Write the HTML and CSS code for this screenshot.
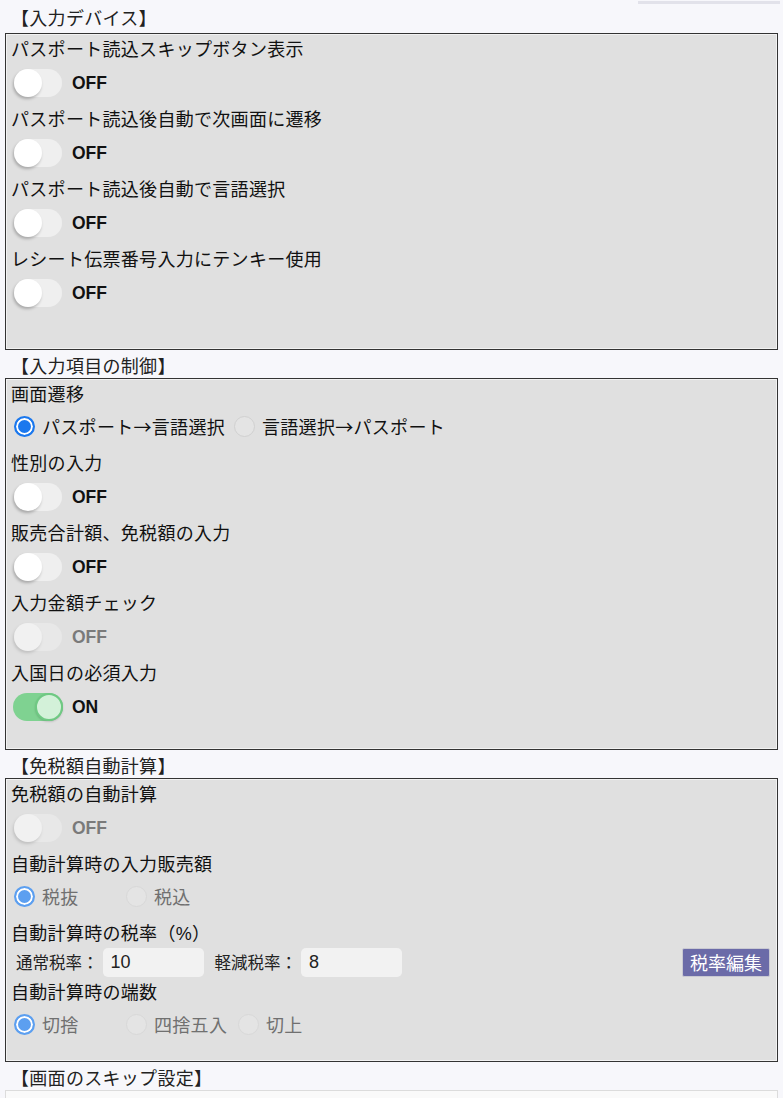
FILE: index.html
```html
<!DOCTYPE html>
<html lang="ja">
<head>
    <meta charset="UTF-8">
    <meta name="viewport" content="width=device-width, initial-scale=1.0">
    <title>設定</title>
    <link rel="stylesheet" href="styles.css">
</head>
<body>

<div class="top-strip"><span class="strip-bar"></span></div>

<div id="settings">

<!-- 入力デバイス -->
<div class="group group-first">
    <div class="group-title">【入力デバイス】</div>
    <div class="group-box box-device">
        <div class="item">
            <div class="item-label">パスポート読込スキップボタン表示</div>
            <div class="toggle-row">
                <label class="switch"><input type="checkbox"><span class="slider"></span></label>
                <span class="switch-text">OFF</span>
            </div>
        </div>
        <div class="item">
            <div class="item-label">パスポート読込後自動で次画面に遷移</div>
            <div class="toggle-row">
                <label class="switch"><input type="checkbox"><span class="slider"></span></label>
                <span class="switch-text">OFF</span>
            </div>
        </div>
        <div class="item">
            <div class="item-label">パスポート読込後自動で言語選択</div>
            <div class="toggle-row">
                <label class="switch"><input type="checkbox"><span class="slider"></span></label>
                <span class="switch-text">OFF</span>
            </div>
        </div>
        <div class="item">
            <div class="item-label">レシート伝票番号入力にテンキー使用</div>
            <div class="toggle-row">
                <label class="switch"><input type="checkbox"><span class="slider"></span></label>
                <span class="switch-text">OFF</span>
            </div>
        </div>
    </div>
</div>

<!-- 入力項目の制御 -->
<div class="group">
    <div class="group-title">【入力項目の制御】</div>
    <div class="group-box box-input">
        <div class="item">
            <div class="item-label">画面遷移</div>
            <div class="radio-row">
                <label class="radio-option"><input type="radio" name="flow" checked>パスポート→言語選択</label>
                <label class="radio-option"><input type="radio" name="flow">言語選択→パスポート</label>
            </div>
        </div>
        <div class="item">
            <div class="item-label">性別の入力</div>
            <div class="toggle-row">
                <label class="switch"><input type="checkbox"><span class="slider"></span></label>
                <span class="switch-text">OFF</span>
            </div>
        </div>
        <div class="item">
            <div class="item-label">販売合計額、免税額の入力</div>
            <div class="toggle-row">
                <label class="switch"><input type="checkbox"><span class="slider"></span></label>
                <span class="switch-text">OFF</span>
            </div>
        </div>
        <div class="item">
            <div class="item-label">入力金額チェック</div>
            <div class="toggle-row is-disabled">
                <label class="switch"><input type="checkbox" disabled><span class="slider"></span></label>
                <span class="switch-text">OFF</span>
            </div>
        </div>
        <div class="item">
            <div class="item-label">入国日の必須入力</div>
            <div class="toggle-row">
                <label class="switch"><input type="checkbox" checked><span class="slider"></span></label>
                <span class="switch-text">ON</span>
            </div>
        </div>
    </div>
</div>

<!-- 免税額自動計算 -->
<div class="group">
    <div class="group-title">【免税額自動計算】</div>
    <div class="group-box box-calc">
        <div class="item">
            <div class="item-label">免税額の自動計算</div>
            <div class="toggle-row is-disabled">
                <label class="switch"><input type="checkbox" disabled><span class="slider"></span></label>
                <span class="switch-text">OFF</span>
            </div>
        </div>
        <div class="item">
            <div class="item-label">自動計算時の入力販売額</div>
            <div class="radio-row">
                <label class="radio-option"><input type="radio" name="base" checked disabled>税抜</label>
                <label class="radio-option"><input type="radio" name="base" disabled>税込</label>
            </div>
        </div>
        <div class="item">
            <div class="item-label">自動計算時の税率（%）</div>
            <div class="rate-row">
                <span class="rate-label">通常税率：</span>
                <input class="rate-input" type="text" value="10">
                <span class="rate-label">軽減税率：</span>
                <input class="rate-input" type="text" value="8">
                <button type="button" class="rate-button">税率編集</button>
            </div>
        </div>
        <div class="item">
            <div class="item-label">自動計算時の端数</div>
            <div class="radio-row">
                <label class="radio-option"><input type="radio" name="round" checked disabled>切捨</label>
                <label class="radio-option"><input type="radio" name="round" disabled>四捨五入</label>
                <label class="radio-option"><input type="radio" name="round" disabled>切上</label>
            </div>
        </div>
    </div>
</div>

<!-- 画面のスキップ設定 -->
<div class="group">
    <div class="group-title">【画面のスキップ設定】</div>
    <div class="group-box box-skip"></div>
</div>

</div>

</body>
</html>
```

FILE: styles.css
```css
body {
    margin: 0;
    background-color: #f7f7fb;
    font-family: "Liberation Sans", "Noto Sans CJK JP", sans-serif;
    font-size: 18px;
    color: #111;
}

.top-strip {
    display: flex;
    justify-content: flex-end;
    height: 8px;
}

.strip-bar {
    width: 142px;
    height: 3px;
    margin: 1px 3px 0 0;
    background-color: #e2e2ea;
}

#settings {
    padding: 0 5px;
}

.group-title {
    padding: 0 0 0 6px;
    line-height: 22px;
    letter-spacing: 0.3px;
    color: #222;
}

.group + .group .group-title {
    padding-top: 6px;
}

.group-first .group-title {
    margin-bottom: 3px;
}

.group-box {
    background-color: #e0e0e0;
    border: 1px solid #333;
    box-shadow: inset 0 0 0 1px #f2f2f2;
    padding: 3px 5px 12px 5px;
}

.box-device { padding-bottom: 32px; }
.box-input  { padding-bottom: 18px; }
.box-calc   { padding-bottom: 12px; }

.box-skip {
    height: 30px;
    background-color: #fafafa;
    border-color: #dcdcdc;
    box-shadow: none;
}

.item-label {
    line-height: 26px;
    letter-spacing: 0.3px;
}

/* toggle switch */
.toggle-row {
    display: flex;
    align-items: center;
    height: 30px;
    margin: 5px 0 9px 0;
    padding-left: 3px;
}

.switch {
    display: block;
    width: 48px;
    height: 28px;
    cursor: pointer;
}

.switch input {
    display: none;
}

.slider {
    display: flex;
    justify-content: flex-start;
    height: 100%;
    border-radius: 14px;
    background-color: #efefef;
}

.slider::before {
    content: "";
    width: 28px;
    height: 28px;
    border-radius: 50%;
    background-color: #fff;
    box-shadow: -1px 2px 3px rgba(0, 0, 0, 0.25);
}

.switch input:checked + .slider {
    justify-content: flex-end;
    background-color: #7fd291;
    margin-left: -1px;
    width: 50px;
}

.switch input:checked + .slider::before {
    box-sizing: border-box;
    border: 2px solid #6fc983;
    background-color: #d3f1d9;
    box-shadow: 0 1px 2px rgba(0, 0, 0, 0.15);
}

.switch-text {
    margin-left: 10px;
    font-size: 17.5px;
    font-weight: bold;
    color: #111;
}

.is-disabled .switch {
    opacity: 0.55;
}

.is-disabled .switch-text {
    color: #7a7a7a;
}

/* radio buttons */
.radio-row {
    display: flex;
    align-items: center;
    height: 30px;
    margin: 3px 0 10px 0;
    padding-left: 3px;
}

.radio-option {
    display: flex;
    align-items: center;
    min-width: 103px;
    margin-right: 9px;
    font-family: "Noto Sans CJK JP", sans-serif;
    letter-spacing: 0.3px;
}

.radio-option input {
    appearance: none;
    -webkit-appearance: none;
    box-sizing: border-box;
    width: 21px;
    height: 21px;
    margin: 0 7px 0 0;
    border-radius: 50%;
    border: 1px solid #d0d0d0;
    background-color: #e4e4e4;
}

.radio-option input:checked {
    border: 2px solid #1b78ee;
    background-color: #1b78ee;
    box-shadow: inset 0 0 0 2px #fff;
}

.radio-option input:disabled {
    border-color: #d8d8d8;
}

.radio-option input:disabled:checked {
    border-color: #5c9ff0;
    background-color: #5c9ff0;
}

.radio-option:has(input:disabled) {
    color: #707070;
}

/* tax rate row */
.rate-row {
    display: flex;
    align-items: center;
    height: 30px;
    margin: 0 0 3px 0;
    padding-left: 5px;
}

.rate-label {
    font-size: 16.5px;
    margin-right: 4px;
    color: #222;
}

.rate-input {
    box-sizing: border-box;
    width: 101px;
    height: 29px;
    margin-right: 11px;
    padding: 0 8px;
    border: none;
    border-radius: 5px;
    background-color: #f2f2f2;
    font-family: "Liberation Sans", sans-serif;
    font-size: 18px;
    color: #222;
}

.rate-button {
    margin-left: auto;
    margin-right: 2px;
    height: 29px;
    padding: 0 7px;
    border: 1px solid #c9c9d2;
    border-radius: 2px;
    background-color: #6b6ba8;
    color: #fff;
    font-family: "Noto Sans CJK JP", sans-serif;
    font-size: 18px;
    cursor: pointer;
}
```
